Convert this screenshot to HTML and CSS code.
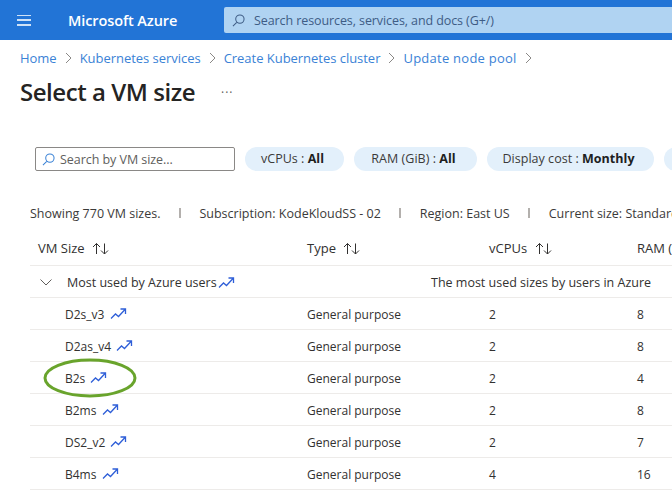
FILE: index.html
```html
<!DOCTYPE html>
<html lang="en">
<head>
<meta charset="utf-8">
<title>Select a VM size</title>
<link rel="stylesheet" href="styles.css">
</head>
<body>
<svg class="defs" width="0" height="0">
  <symbol id="trend" viewBox="0 0 16 12">
    <path d="M0.5 10.5 L5 6 L8 8.5 L14.5 1.5 M10 1 H15 V6" fill="none" stroke="currentColor" stroke-width="1.3"/>
  </symbol>
  <symbol id="sort" viewBox="0 0 17 13">
    <path d="M4.5 12 V1.5 M1 5 L4.5 1.5 L8 5 M12.5 1.5 V12 M9 8.5 L12.5 12 L16 8.5" fill="none" stroke="currentColor" stroke-width="1"/>
  </symbol>
  <symbol id="chev" viewBox="0 0 7 12">
    <path d="M1 1 L6 6 L1 11" fill="none" stroke="currentColor" stroke-width="1"/>
  </symbol>
  <symbol id="search" viewBox="0 0 14 14">
    <path d="M13 5.5 A4.5 4.5 0 1 1 4 5.5 A4.5 4.5 0 1 1 13 5.5 Z M5.4 8.8 L1 13" fill="none" stroke="currentColor" stroke-width="1.1"/>
  </symbol>
</svg>

<header class="topbar">
  <button class="menu" aria-label="Menu"><span></span><span></span><span></span></button>
  <div class="brand">Microsoft Azure</div>
  <div class="globalsearch">
    <svg class="gs-icon"><use href="#search"/></svg>
    <span>Search resources, services, and docs (G+/)</span>
  </div>
</header>

<nav class="crumbs">
  <a>Home</a><svg class="chev"><use href="#chev"/></svg>
  <a>Kubernetes services</a><svg class="chev"><use href="#chev"/></svg>
  <a>Create Kubernetes cluster</a><svg class="chev"><use href="#chev"/></svg>
  <a class="last">Update node pool</a><svg class="chev"><use href="#chev"/></svg>
</nav>

<div class="titlerow">
  <h1>Select a VM size</h1>
  <span class="more">···</span>
</div>

<div class="filters">
  <div class="vmsearch"><svg class="vs-icon"><use href="#search"/></svg><span>Search by VM size...</span></div>
  <div class="pill p1">vCPUs : <b>All</b></div>
  <div class="pill p2">RAM (GiB) : <b>All</b></div>
  <div class="pill p3">Display cost : <b>Monthly</b></div>
  <div class="pill p4"></div>
</div>

<div class="info">
  <span>Showing 770 VM sizes.</span><i></i>
  <span>Subscription: KodeKloudSS - 02</span><i></i>
  <span>Region: East US</span><i></i>
  <span>Current size: Standard_DS2_v2</span>
</div>

<section class="table">
  <div class="row head">
    <div class="c1">VM Size <svg class="sort"><use href="#sort"/></svg></div>
    <div class="c2">Type <svg class="sort"><use href="#sort"/></svg></div>
    <div class="c3">vCPUs <svg class="sort"><use href="#sort"/></svg></div>
    <div class="c4">RAM (GiB)</div>
  </div>
  <div class="row group">
    <div class="c1 groupname">
      <svg class="expander" viewBox="0 0 12 7"><path d="M0.5 0.5 L6 6 L11.5 0.5" fill="none" stroke="currentColor"/></svg>
      <span>Most used by Azure users</span><svg class="trend gt"><use href="#trend"/></svg>
    </div>
    <div class="groupdesc">The most used sizes by users in Azure</div>
  </div>
  <div class="row item"><div class="c1 name">D2s_v3 <svg class="trend"><use href="#trend"/></svg></div><div class="c2">General purpose</div><div class="c3">2</div><div class="c4">8</div></div>
  <div class="row item"><div class="c1 name">D2as_v4 <svg class="trend"><use href="#trend"/></svg></div><div class="c2">General purpose</div><div class="c3">2</div><div class="c4">8</div></div>
  <div class="row item"><div class="c1 name">B2s <svg class="trend"><use href="#trend"/></svg></div><div class="c2">General purpose</div><div class="c3">2</div><div class="c4">4</div></div>
  <div class="row item"><div class="c1 name">B2ms <svg class="trend"><use href="#trend"/></svg></div><div class="c2">General purpose</div><div class="c3">2</div><div class="c4">8</div></div>
  <div class="row item"><div class="c1 name">DS2_v2 <svg class="trend"><use href="#trend"/></svg></div><div class="c2">General purpose</div><div class="c3">2</div><div class="c4">7</div></div>
  <div class="row item"><div class="c1 name">B4ms <svg class="trend"><use href="#trend"/></svg></div><div class="c2">General purpose</div><div class="c3">4</div><div class="c4">16</div></div>
</section>

<svg class="circle" viewBox="0 0 94 40"><ellipse cx="47" cy="20" rx="45" ry="18" fill="none" stroke="#69a42c" stroke-width="3"/></svg>
</body>
</html>
```

FILE: styles.css
```css
* { box-sizing: border-box; }
html, body { margin: 0; height: 100%; overflow: hidden; }
body {
  font-family: "Open Sans", "Noto Sans", sans-serif;
  font-size: 12px;
  color: #323130;
  background: #fff;
  position: relative;
}
.defs { position: absolute; }

.topbar {
  height: 40px;
  background: #2274d6;
  display: flex;
  align-items: center;
  color: #fff;
}
.menu {
  width: 14px; height: 11px; margin-left: 17px; padding: 0; border: 0; background: none;
  display: flex; flex-direction: column; justify-content: space-between;
}
.menu span { display: block; height: 1.5px; background: #cfe2f7; }
.brand { margin-left: 37px; width: 156px; font-size: 14.5px; font-weight: 600; letter-spacing: -0.1px; }
.globalsearch {
  flex: 1; height: 26px; background: #b0d3f2; border-radius: 2px 0 0 2px;
  display: flex; align-items: center; padding-left: 8px; color: #3e5c85;
  font-size: 12.5px; letter-spacing: -0.09px;
}
.gs-icon { width: 13px; height: 13px; margin-right: 9px; color: #3e5c85; }

.crumbs {
  display: flex; align-items: center; height: 20px; margin-top: 8px; padding-left: 20px;
  color: #3a82d6; font-size: 13px; letter-spacing: -0.03px;
}
.crumbs .last { letter-spacing: 0.25px; }
.chev { width: 7px; height: 12px; margin: 0 8px; color: #8a8886; }

.titlerow { display: flex; align-items: center; height: 32px; margin-top: 7px; padding-left: 20px; }
h1 { margin: 0; font-size: 24px; font-weight: 600; color: #252423; letter-spacing: -0.45px; width: 201px; white-space: nowrap; }
.more { font-size: 12px; color: #605e5c; letter-spacing: 1px; margin-top: 3px; }

.filters { display: flex; gap: 10px; margin-top: 40px; padding-left: 35px; height: 24px; white-space: nowrap; font-size: 12.5px; overflow: hidden; }
.vmsearch {
  width: 200px; flex: none; border: 1px solid #8a8886; border-radius: 2px;
  display: flex; align-items: center; padding-left: 6px; color: #605e5c; letter-spacing: -0.05px;
}
.vs-icon { width: 13px; height: 13px; margin-right: 5px; color: #3a82d6; }
.pill {
  flex: none; background: #e3f0fb; border-radius: 12px; line-height: 24px; text-align: center;
  padding-right: 4px; letter-spacing: 0.03px; color: #3b3a39;
}
.pill b { color: #201f1e; font-weight: 700; }
.p1 { width: 99px; }
.p2 { width: 123px; }
.p3 { width: 167px; }
.p4 { width: 40px; }

.info {
  display: flex; align-items: center; height: 18px; margin-top: 33px; padding-left: 30px;
  white-space: nowrap; font-size: 12.5px; color: #3b3a39; overflow: hidden;
}
.info i { display: block; width: 2px; height: 10px; background: #b3b0ad; margin: 0 18.5px; flex: none; }

.table { margin: 17px 0 0 30px; overflow: hidden; }
.row { display: grid; grid-template-columns: 277px 182px 148px 1fr; align-items: center; border-bottom: 1px solid #edebe9; height: 32px; padding-top: 2px; white-space: nowrap; }
.row.head { height: 27px; padding: 0 0 9px; font-size: 13px; font-weight: 500; }
.row.head .c1 { padding-left: 8px; }
.sort { width: 17px; height: 13px; vertical-align: -2px; margin-left: 4px; color: #323130; }
.row.group { grid-template-columns: 401px 1fr; font-size: 12.5px; font-weight: 500; }
.groupname { display: flex; align-items: center; padding-left: 10px; }
.expander { width: 12px; height: 7px; margin-right: 15px; color: #605e5c; flex: none; }
.trend { width: 17px; height: 12px; color: #2f5fd8; vertical-align: -1px; margin-left: 2px; }
.gt { margin-left: 1px; }
.name { padding-left: 35px; }

.circle { position: absolute; left: 43px; top: 358px; width: 94px; height: 40px; }
```
